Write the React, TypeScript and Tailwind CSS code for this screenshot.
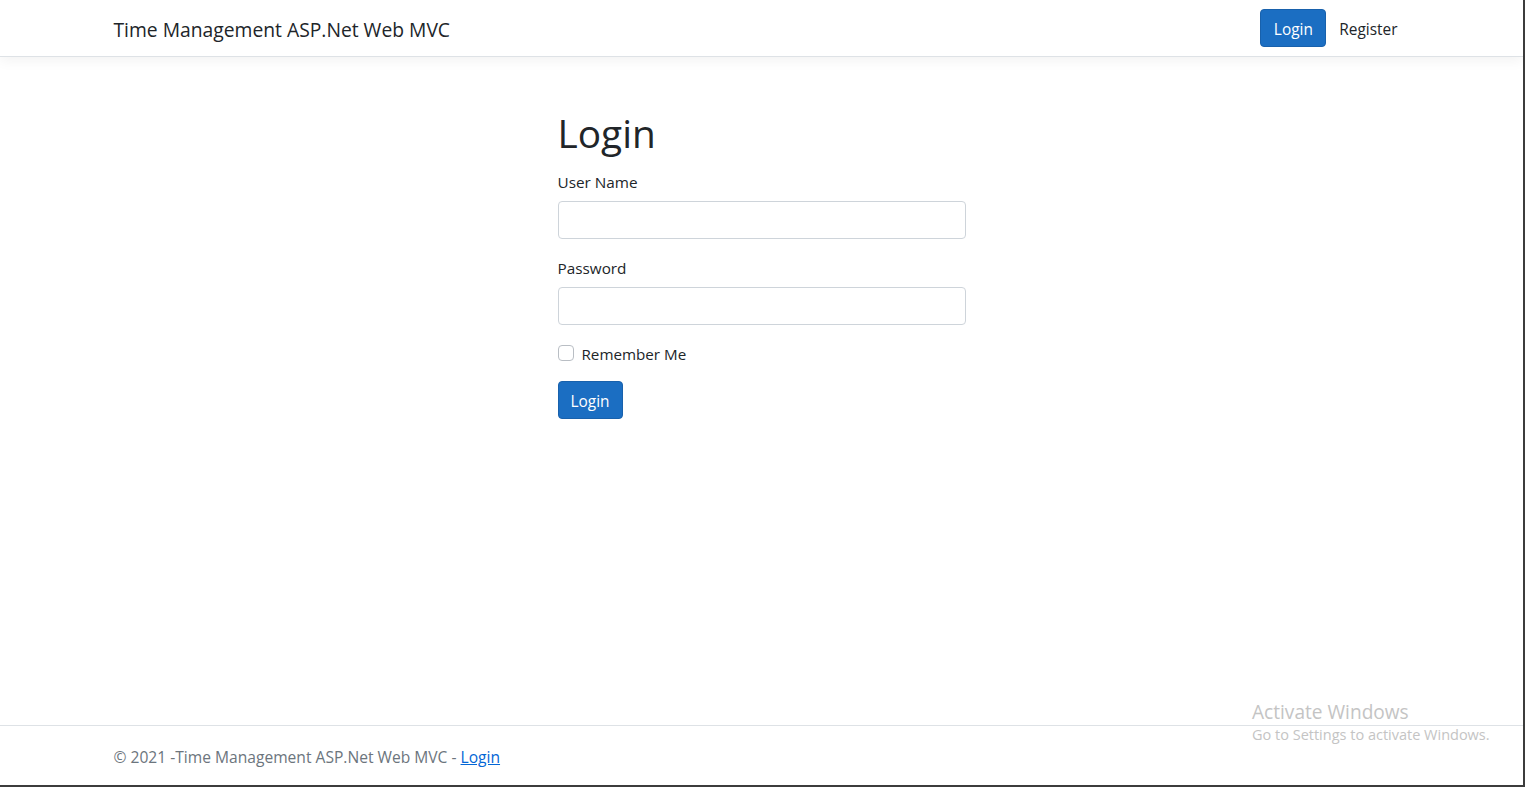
import { useState } from 'react';

const font = { fontFamily: '"Open Sans", "Noto Sans", sans-serif' };

function NavBar() {
  return (
    <header className="h-[57px] border-b border-[#dee2e6] bg-white shadow-[0_4px_12px_rgba(0,0,0,0.05)] relative z-10">
      <nav className="mx-auto flex h-14 w-[1296px] items-center justify-between">
        <a className="mt-[4px] text-[19.3px] leading-[30px] text-[#212529]">Time Management ASP.Net Web MVC</a>
        <div className="flex items-center gap-[5px] pr-[4px]">
          <button className="h-[38px] w-[66px] rounded-[4px] border border-[#1861ac] bg-[#1b6ec2] pt-[3px] text-[15.4px] text-white">
            Login
          </button>
          <a className="mt-[4px] px-[8px] text-[15.4px] text-[#212529]">Register</a>
        </div>
      </nav>
    </header>
  );
}

function LoginForm() {
  const [remember, setRemember] = useState(false);

  const inputClass =
    'block h-[38px] w-full rounded-[4px] border border-[#ced4da] bg-white px-3 text-[15.4px] text-[#212529] outline-none focus:border-[#86b7fe]';

  return (
    <div className="w-[408px] pt-[52px]">
      <h1 className="text-[38.8px] font-normal leading-[48px] text-[#212529]">Login</h1>

      <div className="mt-[12px]">
        <label className="mb-2 block pt-[2px] text-[15.3px] leading-[22px] text-[#212529]">User Name</label>
        <input type="text" className={inputClass} />
      </div>

      <div className="mt-4">
        <label className="mb-2 block pt-[2px] text-[15.3px] leading-[22px] text-[#212529]">Password</label>
        <input type="password" className={inputClass} />
      </div>

      <label className="mt-4 flex h-6 items-center gap-[8px] text-[15.2px] text-[#212529]">
        <input
          type="checkbox"
          checked={remember}
          onChange={(e) => setRemember(e.target.checked)}
          className="h-4 w-4 appearance-none rounded-[4px] border border-[#b9bec4] bg-white checked:bg-[#0d6efd]"
        />
        <span className="pt-[2px] leading-[22px]">Remember Me</span>
      </label>

      <button className="mt-4 h-[38px] w-[65px] rounded-[4px] border border-[#1861ac] bg-[#1b6ec2] pt-[3px] text-[15.4px] text-white">
        Login
      </button>
    </div>
  );
}

export default function App() {
  return (
    <div
      className="relative flex h-screen w-full flex-col overflow-hidden border-r-2 border-b-2 border-[#3c3c3c] bg-white"
      style={font}
    >
      <NavBar />

      <main className="mx-auto w-[1296px] flex-1">
        <div className="pl-[444px]">
          <LoginForm />
        </div>
      </main>

      <footer className="h-[60px] border-t border-[#dee2e6] pt-[3px] text-[15.6px] leading-[56px] text-[#6c757d]">
        <div className="mx-auto w-[1296px] whitespace-nowrap">
          © 2021 -Time Management ASP.Net Web MVC - <a className="text-[#0366d6] underline">Login</a>
        </div>
      </footer>

      <div className="pointer-events-none absolute left-[1252px] top-[700px] text-[#c4c4c4]">
        <p className="text-[19.1px] leading-[24px]">Activate Windows</p>
        <p className="text-[14.5px] leading-[22px]">Go to Settings to activate Windows.</p>
      </div>
    </div>
  );
}
